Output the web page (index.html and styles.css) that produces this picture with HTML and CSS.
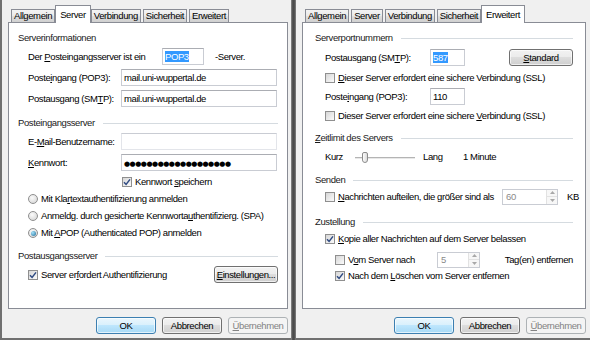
FILE: index.html
```html
<!DOCTYPE html>
<html lang="de">
<head>
<meta charset="utf-8">
<title>Eigenschaften</title>
<link rel="stylesheet" href="styles.css">
</head>
<body>
<div class="screen">
  <section class="dialog dialog-left">
    <nav class="tabs">
      <span class="tab">Allgemein</span>
      <span class="tab tab-active">Server</span>
      <span class="tab">Verbindung</span>
      <span class="tab">Sicherheit</span>
      <span class="tab">Erweitert</span>
    </nav>
    <div class="panel panel-server">
      <div class="gtitle gtitle-plain sp8">Serverinformationen</div>
      <div class="row sp3">
        <span class="lab lab-wide">Der <u>P</u>osteingangsserver ist ein</span>
        <span class="field field-short"><span class="sel">POP3</span></span>
        <span class="after">-Server.</span>
      </div>
      <div class="row sp4">
        <span class="lab">Poste<u>i</u>ngang (POP3):</span>
        <span class="field field-long">mail.uni-wuppertal.de</span>
      </div>
      <div class="row sp4">
        <span class="lab">Postausgang (SM<u>T</u>P):</span>
        <span class="field field-long">mail.uni-wuppertal.de</span>
      </div>

      <div class="gtitle sp9">Posteingangsserver</div>
      <div class="row sp3">
        <span class="lab">E-<u>M</u>ail-Benutzername:</span>
        <span class="field field-long field-blank"></span>
      </div>
      <div class="row sp4">
        <span class="lab"><u>K</u>ennwort:</span>
        <span class="field field-long"><span class="dots">●●●●●●●●●●●●●●●●●●●</span></span>
      </div>
      <div class="crow crow-field sp4">
        <span class="cb"><svg viewBox="0 0 8 8"><path d="M1 4.2 L3.1 6.4 L7 1.4"/></svg></span>
        <span>Kennwort <u>s</u>peichern</span>
      </div>
      <div class="crow sp3">
        <span class="radio"></span>
        <span>Mit Kla<u>r</u>textauthentifizierung anmelden</span>
      </div>
      <div class="crow sp3">
        <span class="radio"></span>
        <span>Anmeldg. durch gesicherte Kennworta<u>u</u>thentifizierg. (SPA)</span>
      </div>
      <div class="crow sp3">
        <span class="radio radio-on"></span>
        <span>Mit <u>A</u>POP (Authenticated POP) anmelden</span>
      </div>

      <div class="gtitle sp9">Postausgangsserver</div>
      <div class="row sp3">
        <span class="cb"><svg viewBox="0 0 8 8"><path d="M1 4.2 L3.1 6.4 L7 1.4"/></svg></span>
        <span>Server er<u>f</u>ordert Authentifizierung</span>
        <span class="btn btn-inline"><u>E</u>instellungen...</span>
      </div>
    </div>
    <div class="buttons">
      <span class="btn btn-default">OK</span>
      <span class="btn">Abbrechen</span>
      <span class="btn btn-disabled"><u>Ü</u>bernehmen</span>
    </div>
  </section>

  <div class="divider"></div>

  <section class="dialog dialog-right">
    <nav class="tabs">
      <span class="tab">Allgemein</span>
      <span class="tab">Server</span>
      <span class="tab">Verbindung</span>
      <span class="tab">Sicherheit</span>
      <span class="tab tab-active">Erweitert</span>
    </nav>
    <div class="panel panel-advanced">
      <div class="gtitle sp8">Serverportnummern</div>
      <div class="row sp4">
        <span class="lab">Postausgang (SM<u>T</u>P):</span>
        <span class="field field-port"><span class="sel">587</span></span>
        <span class="btn btn-inline"><u>S</u>tandard</span>
      </div>
      <div class="crow sp5">
        <span class="cb"></span>
        <span><u>D</u>ieser Server erfordert eine sichere Verbindung (SSL)</span>
      </div>
      <div class="row sp3">
        <span class="lab">Poste<u>i</u>ngang (POP3):</span>
        <span class="field field-port">110</span>
      </div>
      <div class="crow sp4">
        <span class="cb"></span>
        <span>Dieser Server erfordert eine sichere <u>V</u>erbindung (SSL)</span>
      </div>

      <div class="gtitle sp8"><span><u>Z</u>eitlimit des Servers</span></div>
      <div class="crow sp5">
        <span class="slabel">Kurz</span>
        <span class="slider"><span class="thumb"></span></span>
        <span class="slabel-long">Lang</span>
        <span>1 Minute</span>
      </div>

      <div class="gtitle sp9">Senden</div>
      <div class="row sp1">
        <span class="cbwrap cbwrap-split">
          <span class="cb"></span>
          <span><u>N</u>achrichten aufteilen, die größer sind als</span>
        </span>
        <span class="spin spin-kb">
          <span class="spin-val">60</span>
          <span class="spin-btns">
            <span><svg viewBox="0 0 5 3"><path d="M0 3 L2.5 0 L5 3Z"/></svg></span>
            <span><svg viewBox="0 0 5 3"><path d="M0 0 L2.5 3 L5 0Z"/></svg></span>
          </span>
        </span>
        <span class="unit">KB</span>
      </div>

      <div class="gtitle sp10">Zustellung</div>
      <div class="crow sp3">
        <span class="cb"><svg viewBox="0 0 8 8"><path d="M1 4.2 L3.1 6.4 L7 1.4"/></svg></span>
        <span><u>K</u>opie aller Nachrichten auf dem Server belassen</span>
      </div>
      <div class="row row-sub sp5">
        <span class="cbwrap cbwrap-days">
          <span class="cb"></span>
          <span>V<u>o</u>m Server nach</span>
        </span>
        <span class="spin spin-days">
          <span class="spin-val">5</span>
          <span class="spin-btns">
            <span><svg viewBox="0 0 5 3"><path d="M0 3 L2.5 0 L5 3Z"/></svg></span>
            <span><svg viewBox="0 0 5 3"><path d="M0 0 L2.5 3 L5 0Z"/></svg></span>
          </span>
        </span>
        <span class="days-text">Tag(en) entfernen</span>
      </div>
      <div class="crow row-sub sp1">
        <span class="cb"><svg viewBox="0 0 8 8"><path d="M1 4.2 L3.1 6.4 L7 1.4"/></svg></span>
        <span>Nach dem <u>L</u>öschen vom Server entfernen</span>
      </div>
    </div>
    <div class="buttons">
      <span class="btn btn-default">OK</span>
      <span class="btn">Abbrechen</span>
      <span class="btn btn-disabled"><u>Ü</u>bernehmen</span>
    </div>
  </section>
</div>
</body>
</html>
```

FILE: styles.css
```css
* { box-sizing: border-box; }
html, body { margin: 0; padding: 0; }
body {
  width: 590px;
  height: 340px;
  overflow: hidden;
  background: #f0f0f0;
  font-family: "Liberation Sans", Arial, sans-serif;
  font-size: 9.5px;
  letter-spacing: -0.4px;
  line-height: 14px;
  color: #000;
}
u { text-decoration: underline; text-underline-offset: 1px; }

.screen { display: flex; height: 340px; }

.dialog {
  display: flex;
  flex-direction: column;
  height: 340px;
  background: #f0f0f0;
  border-bottom: 2px solid #707070;
}
.dialog-left { width: 291px; border-left: 2px solid #707070; padding: 0 3px 0 6px; }
.dialog-right { width: 294px; padding: 0 4px 0 6px; }
.divider {
  width: 5px;
  flex: none;
  background: linear-gradient(to right, #8e8e8e, #4b4b4b 35%, #4b4b4b 65%, #858585);
}

/* tabs */
.tabs {
  display: flex;
  align-items: flex-end;
  gap: 2px;
  height: 22px;
  padding-left: 3px;
}
.tab {
  height: 13px;
  padding: 0 2px;
  border: 1px solid #898c95;
  border-bottom: 0;
  background: linear-gradient(#f3f3f3, #ebebeb 45%, #dddddd 55%, #d0d0d0);
  line-height: 12px;
  white-space: nowrap;
}
.tab-active {
  position: relative;
  z-index: 1;
  height: 18px;
  margin: 0 -2px -1px;
  padding: 0 4px;
  background: #fff;
  line-height: 17px;
}

/* panel */
.panel {
  height: 287px;
  border: 1px solid #898c95;
  background: #fff;
  display: flex;
  flex-direction: column;
}
.panel-server { padding: 0 9px 0 9px; }
.panel-advanced { padding: 0 12px 0 12px; }

.sp1 { margin-top: 1px; }
.sp3 { margin-top: 3px; }
.sp4 { margin-top: 4px; }
.sp5 { margin-top: 5px; }
.sp8 { margin-top: 8px; }
.sp9 { margin-top: 9px; }
.sp10 { margin-top: 10px; }

.gtitle {
  display: flex;
  align-items: center;
  height: 14px;
  white-space: nowrap;
  color: #1a1a1a;
}
.gtitle::after {
  content: "";
  flex: 1;
  height: 1px;
  margin-left: 8px;
  background: #d5dbe0;
}
.gtitle-plain::after { display: none; }

.row {
  display: flex;
  align-items: center;
  height: 17px;
  padding-left: 10px;
  white-space: nowrap;
}
.crow {
  display: flex;
  align-items: center;
  height: 14px;
  padding-left: 10px;
  white-space: nowrap;
}
.crow-field { padding-left: 104px; }
.row-sub { padding-left: 20px; }

.lab { width: 93px; flex: none; }
.panel-advanced .lab { width: 105px; }
.lab-wide { width: 134px; }
.after { margin-left: 11px; }

.field {
  flex: none;
  height: 17px;
  padding: 0 2px;
  border: 1px solid #c9ccd3;
  border-top-color: #abadb3;
  background: #fff;
  line-height: 15px;
  overflow: hidden;
}
.field-long { width: 156px; }
.field-short { width: 42px; }
.field-port { width: 35px; }
.field-blank { border-color: #e3e5ea; border-top-color: #c9ccd3; }
.sel { background: #3399ff; color: #fff; }
.dots {
  font-family: "DejaVu Sans", sans-serif;
  font-size: 7px;
  letter-spacing: -0.5px;
}

/* checkbox & radio */
.cb {
  flex: none;
  width: 10px;
  height: 10px;
  margin-right: 3px;
  border: 1px solid #8f8f8f;
  background: linear-gradient(135deg, #d6d6d6, #fbfbfb);
  display: flex;
  align-items: center;
  justify-content: center;
}
.cb svg { width: 8px; height: 8px; }
.cb path { fill: none; stroke: #2f4a82; stroke-width: 1.5; }
.radio {
  flex: none;
  width: 10px;
  height: 10px;
  margin-right: 3px;
  border: 1px solid #8f8f8f;
  border-radius: 50%;
  background: radial-gradient(circle at 40% 35%, #fbfbfb, #d0d0d0);
  display: flex;
  align-items: center;
  justify-content: center;
}
.radio-on::after {
  content: "";
  width: 5px;
  height: 5px;
  border-radius: 50%;
  background: radial-gradient(circle at 35% 35%, #a4e3fb, #1f6a96);
}

/* buttons */
.btn {
  flex: none;
  width: 60px;
  height: 17px;
  border: 1px solid #707070;
  border-radius: 3px;
  background: linear-gradient(#f2f2f2, #ebebeb 49%, #dddddd 50%, #cfcfcf);
  box-shadow: inset 0 0 0 1px rgba(255, 255, 255, 0.65);
  text-align: center;
  line-height: 15px;
  white-space: nowrap;
}
.btn-default {
  border-color: #3c7fb1;
  background: linear-gradient(#eaf6fd, #d9f0fc 49%, #bee6fd 50%, #a7d9f5);
}
.btn-disabled {
  border-color: #adb2b5;
  background: #f4f4f4;
  color: #838383;
  box-shadow: none;
}
.btn-inline { width: 64px; margin-left: auto; }
.buttons {
  display: flex;
  justify-content: flex-end;
  gap: 6px;
  margin-top: 8px;
}

/* slider */
.slabel { width: 30px; flex: none; }
.slabel-long { width: 40px; flex: none; margin-left: 8px; }
.slider {
  flex: none;
  width: 60px;
  height: 12px;
  display: flex;
  align-items: center;
  background: linear-gradient(#b4b4b4, #b4b4b4) left center / 100% 1px no-repeat,
              linear-gradient(#e8e8e8, #e8e8e8) left calc(50% + 1px) / 100% 1px no-repeat;
}
.thumb {
  width: 6px;
  height: 11px;
  margin-left: 7px;
  border: 1px solid #8c8c8c;
  border-radius: 2px 2px 3px 3px;
  background: linear-gradient(to right, #fdfdfd, #dcdcdc);
}

/* spinners */
.cbwrap { display: flex; align-items: center; flex: none; }
.cbwrap-split { width: 177px; }
.cbwrap-days { width: 102px; }
.spin {
  flex: none;
  display: flex;
  height: 16px;
  border: 1px solid #c9ccd3;
  background: #fff;
  color: #8a8a8a;
}
.spin-kb { width: 56px; }
.spin-days { width: 43px; }
.spin-val { flex: 1; padding-left: 3px; line-height: 14px; }
.spin-btns {
  width: 11px;
  display: flex;
  flex-direction: column;
  border-left: 1px solid #e2e2e2;
  background: #f7f7f7;
}
.spin-btns span {
  flex: 1;
  display: flex;
  align-items: center;
  justify-content: center;
}
.spin-btns span + span { border-top: 1px solid #e2e2e2; }
.spin-btns svg { width: 5px; height: 3px; }
.spin-btns path { fill: #a8a8a8; }
.unit { margin-left: 9px; }
.days-text { margin-left: auto; }
```
